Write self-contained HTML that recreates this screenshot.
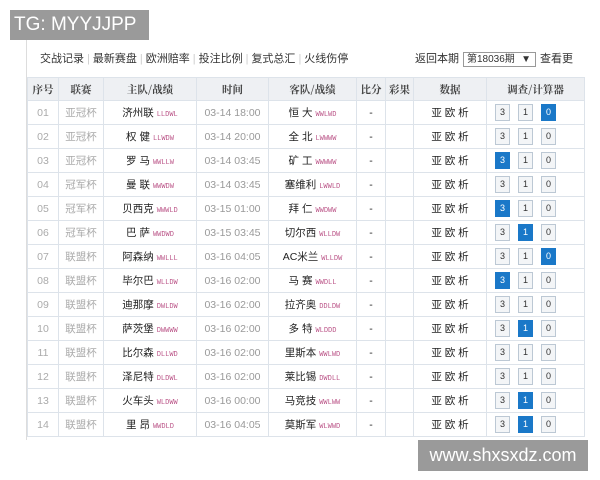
<!DOCTYPE html><html><head><meta charset="utf-8"><style>
body{margin:0;width:600px;height:480px;background:#fff;position:relative;overflow:hidden;font-family:"Liberation Sans","Noto Sans CJK SC",sans-serif;}
.frame{position:absolute;left:26px;top:40px;width:560px;height:400px;border-left:1px solid #ddd;}
.bar{position:absolute;left:40px;top:50px;font-size:11px;color:#333;}
.bar span{color:#ccc;margin:0 3px}
.r{position:absolute;top:50px;left:415px;font-size:11px;color:#333}
.sel{display:inline-block;border:1px solid #999;width:68px;height:13px;line-height:13px;padding-left:3px;margin:0 4px;font-size:10px;position:relative}
table{position:absolute;left:27px;top:77px;border-collapse:collapse;font-size:10.5px;table-layout:fixed}
td,th{border:1px solid #dde3ea;height:23px;padding:0;text-align:center;color:#222;white-space:nowrap;vertical-align:middle}
th{background:#eef0f3;color:#444;font-weight:bold;height:22px;font-family:"Noto Serif CJK SC",serif}
.g{color:#aaa}.t{color:#999}
.f{font-size:7px;color:#b58;font-family:"Liberation Mono",monospace;margin-left:3px}
td.c{text-align:left;padding-left:8px}
.b{display:inline-block;width:13px;height:15px;line-height:15px;border:1px solid #bcc8d4;background:#f3f5f7;color:#333;font-size:9px;margin-right:8px;text-align:center;vertical-align:middle}
.b.on{background:#1a78c8;color:#fff;border-color:#1a78c8}
.wm{position:absolute;background:#9a9a9a;color:#fff;}
</style></head><body>
<div class="frame"></div>
<div class="bar">交战记录<span>|</span>最新赛盘<span>|</span>欧洲赔率<span>|</span>投注比例<span>|</span>复式总汇<span>|</span>火线伤停</div>
<div class="r">返回本期<span class="sel">第18036期 <span style="position:absolute;right:4px">▼</span></span>查看更</div>
<table>
<colgroup><col style="width:31px"><col style="width:45px"><col style="width:93px"><col style="width:72px"><col style="width:88px"><col style="width:29px"><col style="width:28px"><col style="width:73px"><col style="width:98px"></colgroup>
<tr><th>序号</th><th>联赛</th><th>主队/战绩</th><th>时间</th><th>客队/战绩</th><th>比分</th><th>彩果</th><th>数据</th><th>调查/计算器</th></tr>
<tr><td class="g">01</td><td class="g">亚冠杯</td><td>济州联<span class="f">LLDWL</span></td><td class="t">03-14 18:00</td><td>恒 大<span class="f">WWLWD</span></td><td>-</td><td></td><td>亚 欧 析</td><td class="c"><span class="b">3</span><span class="b">1</span><span class="b on">0</span></td></tr>
<tr><td class="g">02</td><td class="g">亚冠杯</td><td>权 健<span class="f">LLWDW</span></td><td class="t">03-14 20:00</td><td>全 北<span class="f">LWWWW</span></td><td>-</td><td></td><td>亚 欧 析</td><td class="c"><span class="b">3</span><span class="b">1</span><span class="b">0</span></td></tr>
<tr><td class="g">03</td><td class="g">亚冠杯</td><td>罗 马<span class="f">WWLLW</span></td><td class="t">03-14 03:45</td><td>矿 工<span class="f">WWWWW</span></td><td>-</td><td></td><td>亚 欧 析</td><td class="c"><span class="b on">3</span><span class="b">1</span><span class="b">0</span></td></tr>
<tr><td class="g">04</td><td class="g">冠军杯</td><td>曼 联<span class="f">WWWDW</span></td><td class="t">03-14 03:45</td><td>塞维利<span class="f">LWWLD</span></td><td>-</td><td></td><td>亚 欧 析</td><td class="c"><span class="b">3</span><span class="b">1</span><span class="b">0</span></td></tr>
<tr><td class="g">05</td><td class="g">冠军杯</td><td>贝西克<span class="f">WWWLD</span></td><td class="t">03-15 01:00</td><td>拜 仁<span class="f">WWDWW</span></td><td>-</td><td></td><td>亚 欧 析</td><td class="c"><span class="b on">3</span><span class="b">1</span><span class="b">0</span></td></tr>
<tr><td class="g">06</td><td class="g">冠军杯</td><td>巴 萨<span class="f">WWDWD</span></td><td class="t">03-15 03:45</td><td>切尔西<span class="f">WLLDW</span></td><td>-</td><td></td><td>亚 欧 析</td><td class="c"><span class="b">3</span><span class="b on">1</span><span class="b">0</span></td></tr>
<tr><td class="g">07</td><td class="g">联盟杯</td><td>阿森纳<span class="f">WWLLL</span></td><td class="t">03-16 04:05</td><td>AC米兰<span class="f">WLLDW</span></td><td>-</td><td></td><td>亚 欧 析</td><td class="c"><span class="b">3</span><span class="b">1</span><span class="b on">0</span></td></tr>
<tr><td class="g">08</td><td class="g">联盟杯</td><td>毕尔巴<span class="f">WLLDW</span></td><td class="t">03-16 02:00</td><td>马 赛<span class="f">WWDLL</span></td><td>-</td><td></td><td>亚 欧 析</td><td class="c"><span class="b on">3</span><span class="b">1</span><span class="b">0</span></td></tr>
<tr><td class="g">09</td><td class="g">联盟杯</td><td>迪那摩<span class="f">DWLDW</span></td><td class="t">03-16 02:00</td><td>拉齐奥<span class="f">DDLDW</span></td><td>-</td><td></td><td>亚 欧 析</td><td class="c"><span class="b">3</span><span class="b">1</span><span class="b">0</span></td></tr>
<tr><td class="g">10</td><td class="g">联盟杯</td><td>萨茨堡<span class="f">DWWWW</span></td><td class="t">03-16 02:00</td><td>多 特<span class="f">WLDDD</span></td><td>-</td><td></td><td>亚 欧 析</td><td class="c"><span class="b">3</span><span class="b on">1</span><span class="b">0</span></td></tr>
<tr><td class="g">11</td><td class="g">联盟杯</td><td>比尔森<span class="f">DLLWD</span></td><td class="t">03-16 02:00</td><td>里斯本<span class="f">WWLWD</span></td><td>-</td><td></td><td>亚 欧 析</td><td class="c"><span class="b">3</span><span class="b">1</span><span class="b">0</span></td></tr>
<tr><td class="g">12</td><td class="g">联盟杯</td><td>泽尼特<span class="f">DLDWL</span></td><td class="t">03-16 02:00</td><td>莱比锡<span class="f">DWDLL</span></td><td>-</td><td></td><td>亚 欧 析</td><td class="c"><span class="b">3</span><span class="b">1</span><span class="b">0</span></td></tr>
<tr><td class="g">13</td><td class="g">联盟杯</td><td>火车头<span class="f">WLDWW</span></td><td class="t">03-16 00:00</td><td>马竞技<span class="f">WWLWW</span></td><td>-</td><td></td><td>亚 欧 析</td><td class="c"><span class="b">3</span><span class="b on">1</span><span class="b">0</span></td></tr>
<tr><td class="g">14</td><td class="g">联盟杯</td><td>里 昂<span class="f">WWDLD</span></td><td class="t">03-16 04:05</td><td>莫斯军<span class="f">WLWWD</span></td><td>-</td><td></td><td>亚 欧 析</td><td class="c"><span class="b">3</span><span class="b on">1</span><span class="b">0</span></td></tr>
</table>
<div class="wm" style="left:10px;top:10px;width:139px;height:30px;font-size:19px;line-height:30px;padding-left:4px;box-sizing:border-box">TG: MYYJJPP</div>
<div class="wm" style="left:418px;top:440px;width:170px;height:31px;font-size:18px;line-height:31px;text-align:center">www.shxsxdz.com</div>
</body></html>
